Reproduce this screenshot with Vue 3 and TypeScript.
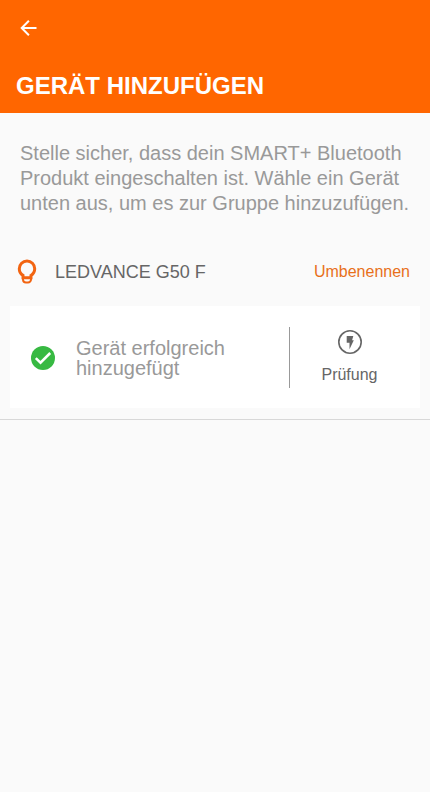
<script setup lang="ts">
import { ref } from 'vue'

interface Device {
  id: number
  name: string
}

const devices = ref<Device[]>([{ id: 1, name: 'LEDVANCE G50 F' }])
</script>

<template>
  <div class="screen">
    <header class="header">
      <button class="back" type="button" aria-label="Zurück">
        <svg viewBox="0 0 24 24" aria-hidden="true">
          <path d="M20.500 12H6M12.900 4.700 5.700 12l7.200 7.300" />
        </svg>
      </button>
      <h1 class="title">GERÄT HINZUFÜGEN</h1>
    </header>

    <main>
      <p class="intro">
        Stelle sicher, dass dein SMART+ Bluetooth Produkt eingeschalten ist. Wähle ein Gerät unten
        aus, um es zur Gruppe hinzuzufügen.
      </p>

      <section v-for="device in devices" :key="device.id" class="device">
        <div class="device-row">
          <svg class="bulb" viewBox="0 0 20 26" aria-hidden="true">
            <path
              d="M6 18.800v-2.400A7.700 7.700 0 0 1 2.300 9.700a7.700 7.700 0 0 1 15.400 0c0 2.900-1.400 5.200-3.700 6.700v2.400z"
            />
            <path class="bulb-base" d="M6 18.500v2a3 3 0 0 0 3 3h2a3 3 0 0 0 3-3v-2" />
          </svg>
          <h2 class="device-name">{{ device.name }}</h2>
          <button class="rename" type="button">Umbenennen</button>
        </div>

        <div class="card">
          <div class="status">
            <svg class="check" viewBox="0 0 24 24" aria-hidden="true">
              <circle cx="12" cy="12" r="12" />
              <path d="m4.800 12.200 4.700 4.500L19.200 7" />
            </svg>
            <p class="message">Gerät erfolgreich hinzugefügt</p>
          </div>
          <button class="test" type="button">
            <svg class="flash" viewBox="0 0 24 24" aria-hidden="true">
              <circle cx="12" cy="12" r="11.200" />
              <path d="M8.700 6h6.600l-1.200 4.300h1.700L11.500 19.300v-6.500H8.700z" />
            </svg>
            <span>Prüfung</span>
          </button>
        </div>
      </section>
    </main>
  </div>
</template>

<style>
body {
  background: #fafafa;
}
</style>

<style scoped>
.screen {
  min-height: 100vh;
  background: #fafafa;
  font-family: 'Liberation Sans', Arial, sans-serif;
  color: #666;
}

button {
  padding: 0;
  border: 0;
  background: none;
  font-family: inherit;
  cursor: pointer;
}

svg {
  display: block;
  flex: none;
}

h1,
h2,
p {
  margin: 0;
}

.header {
  display: flex;
  flex-direction: column;
  align-items: flex-start;
  gap: 32px;
  padding: 16px 16px 13px;
  background: #ff6600;
}

.back svg {
  width: 24px;
  height: 24px;
  fill: none;
  stroke: #fff;
  stroke-width: 2;
}

.title {
  color: #fff;
  font-size: 24px;
  line-height: 28px;
  font-weight: 700;
}

.intro {
  padding: 28px 20px 0;
  color: #999;
  font-size: 20px;
  line-height: 25px;
}

.device {
  padding: 42px 10px 11px;
  border-bottom: 1px solid #d8d8d8;
}

.device-row {
  display: flex;
  align-items: center;
  padding: 0 10px 0 7px;
}

.bulb {
  width: 20px;
  height: 26px;
  margin-right: 18px;
  fill: none;
  stroke: #f26411;
  stroke-width: 3;
}

.bulb .bulb-base {
  stroke-width: 2;
}

.device-name {
  flex: 1;
  font-size: 18px;
  line-height: 26px;
  font-weight: 400;
}

.rename {
  color: #e8701a;
  font-size: 16px;
  line-height: 28px;
}

.card {
  display: flex;
  align-items: center;
  margin-top: 20px;
  padding: 21px 0 20px;
  background: #fff;
}

.status {
  flex: 1;
  display: flex;
  align-items: center;
  gap: 21px;
  padding: 0 40px 0 21px;
}

.check {
  width: 24px;
  height: 24px;
}

.check circle {
  fill: #37b942;
}

.check path {
  fill: none;
  stroke: #fff;
  stroke-width: 2.500;
}

.message {
  color: #999;
  font-size: 20px;
  line-height: 20px;
}

.test {
  display: flex;
  flex-direction: column;
  align-items: center;
  gap: 11px;
  width: 131px;
  padding: 3px 11px 3px 0;
  border-left: 1px solid #999;
  color: #666;
  font-size: 16px;
  line-height: 20px;
}

.flash {
  width: 24px;
  height: 24px;
}

.flash circle {
  fill: none;
  stroke: #666;
  stroke-width: 1.600;
}

.flash path {
  fill: #666;
}
</style>
